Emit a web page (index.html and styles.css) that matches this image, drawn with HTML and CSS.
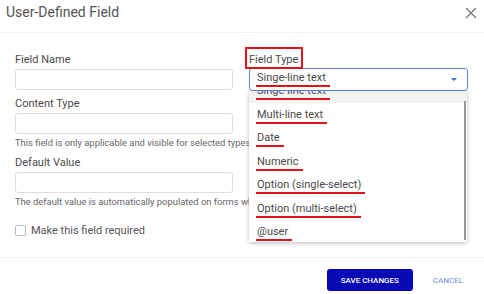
FILE: index.html
```html
<!DOCTYPE html>
<html lang="en">

<head>
    <meta charset="UTF-8">
    <meta name="viewport" content="width=device-width, initial-scale=1.0">
    <title>User-Defined Field</title>
    <link rel="stylesheet" href="styles.css">
</head>

<body>
    <div class="modal">
        <div class="modal-head">
            <h1 class="title">User-Defined Field</h1>
            <span class="close">
                <svg width="12" height="12" viewBox="0 0 12 12">
                    <path d="M1 1L11 11M11 1L1 11" stroke="#777" stroke-width="1.3" fill="none" />
                </svg>
            </span>
        </div>

        <div class="modal-body">
            <div class="col">
                <div class="field">
                    <label class="field-label">Field Name</label>
                    <div class="input"></div>
                </div>
                <div class="field">
                    <label class="field-label">Content Type</label>
                    <div class="input"></div>
                    <p class="hint">This field is only applicable and visible for selected types</p>
                </div>
                <div class="field">
                    <label class="field-label">Default Value</label>
                    <div class="input"></div>
                    <p class="hint">The default value is automatically populated on forms when a new record is created</p>
                </div>
                <div class="check-row">
                    <span class="checkbox"></span>
                    <span class="check-text">Make this field required</span>
                </div>
            </div>

            <div class="col">
                <div class="field select-field">
                    <label class="field-label"><span class="mark-box">Field Type</span></label>
                    <div class="select">
                        <span class="mark">Singe-line text</span>
                        <span class="caret"></span>
                    </div>
                    <div class="menu">
                        <ul class="menu-list">
                            <li class="menu-item current"><span class="mark">Singe-line text</span></li>
                            <li class="menu-item"><span class="mark">Multi-line text</span></li>
                            <li class="menu-item"><span class="mark">Date</span></li>
                            <li class="menu-item"><span class="mark">Numeric</span></li>
                            <li class="menu-item"><span class="mark">Option (single-select)</span></li>
                            <li class="menu-item"><span class="mark">Option (multi-select)</span></li>
                            <li class="menu-item"><span class="mark">@user</span></li>
                        </ul>
                        <div class="scrollbar"></div>
                    </div>
                </div>
            </div>
        </div>

        <div class="modal-foot">
            <button class="btn-save">SAVE CHANGES</button>
            <button class="btn-cancel">CANCEL</button>
        </div>
    </div>
</body>

</html>
```

FILE: styles.css
```css
* {
    margin: 0;
    padding: 0;
    box-sizing: border-box;
}

body {
    background-color: #fff;
    font-family: Roboto, "Noto Sans", sans-serif;
    color: #4a4a4a;
}

li {
    list-style: none;
}

.modal {
    width: 484px;
    height: 294px;
    overflow: hidden;
}

/* header */
.modal-head {
    height: 33px;
    border-bottom: 1px solid #f0f0f0;
    display: flex;
    align-items: flex-start;
    justify-content: space-between;
    padding: 4px 6px 0 6px;
}

.title {
    font-size: 14px;
    line-height: 17px;
    font-weight: 400;
    color: #555;
}

.close {
    display: flex;
    margin: 3px 1px 0 0;
}

/* body */
.modal-body {
    display: grid;
    grid-template-columns: 218px 219px;
    column-gap: 16px;
    padding: 20px 16px 0 15px;
    height: 225px;
    border-bottom: 1px solid #f0f0f0;
}

.field {
    margin-bottom: 7px;
}

.field-label {
    display: block;
    font-size: 11px;
    line-height: 14px;
    margin-bottom: 2px;
    color: #4a4a4a;
}

.input {
    height: 21px;
    border: 1px solid #dcdcdc;
    border-radius: 3px;
}

.hint {
    font-size: 9.4px;
    line-height: 12px;
    margin-top: 3px;
    margin-bottom: 2px;
    color: #666;
    white-space: nowrap;
}

.check-row {
    display: flex;
    align-items: center;
    gap: 5px;
    margin-top: 16px;
}

.checkbox {
    width: 11px;
    height: 11px;
    border: 1px solid #bbb;
    border-radius: 2px;
}

.check-text {
    font-size: 11px;
    color: #555;
}

/* field type select */
.select-field {
    position: relative;
}

.mark-box {
    display: inline-block;
    border: 2px solid #e0141e;
    padding: 4px 3px 0 2px;
    margin: -6px 0 -2px -4px;
}

.select {
    height: 23px;
    margin-top: -1px;
    border: 1px solid #5b8de6;
    border-radius: 3px;
    display: flex;
    align-items: center;
    justify-content: space-between;
    padding: 0 10px 0 7px;
    font-size: 11px;
    color: #4a4a4a;
}

.caret {
    width: 0;
    height: 0;
    border-left: 3px solid transparent;
    border-right: 3px solid transparent;
    border-top: 3px solid #3c6fd4;
}

.mark {
    display: inline-block;
    line-height: 12px;
    border-bottom: 2px solid #e0141e;
    padding: 0 4px 1px 1px;
    margin-left: -1px;
}

.menu {
    position: absolute;
    top: 38px;
    left: 0;
    width: 218px;
    height: 151px;
    background-color: #fff;
    box-shadow: 0 1px 4px rgba(0, 0, 0, 0.28);
    overflow: hidden;
    z-index: 2;
}

.menu-list {
    margin-top: -12px;
}

.menu-item {
    height: 23.5px;
    display: flex;
    align-items: center;
    padding: 4px 0 0 8px;
    font-size: 11px;
    color: #4a4a4a;
}

.menu-item.current {
    background-color: #f2f2f2;
}

.scrollbar {
    position: absolute;
    right: 1px;
    top: 10px;
    width: 2px;
    height: 139px;
    background-color: #999;
}

/* footer */
.modal-foot {
    display: flex;
    justify-content: flex-end;
    align-items: center;
    padding: 11px 21px 0 0;
}

.btn-save {
    width: 86px;
    height: 22px;
    border: none;
    border-radius: 3px;
    background-color: #0808b4;
    color: #fff;
    font-family: Roboto, sans-serif;
    font-size: 8px;
    font-weight: 500;
}

.btn-cancel {
    margin-left: 20px;
    border: none;
    background: none;
    color: #6b8ddc;
    font-family: Roboto, sans-serif;
    font-size: 8px;
    font-weight: 400;
}
```
